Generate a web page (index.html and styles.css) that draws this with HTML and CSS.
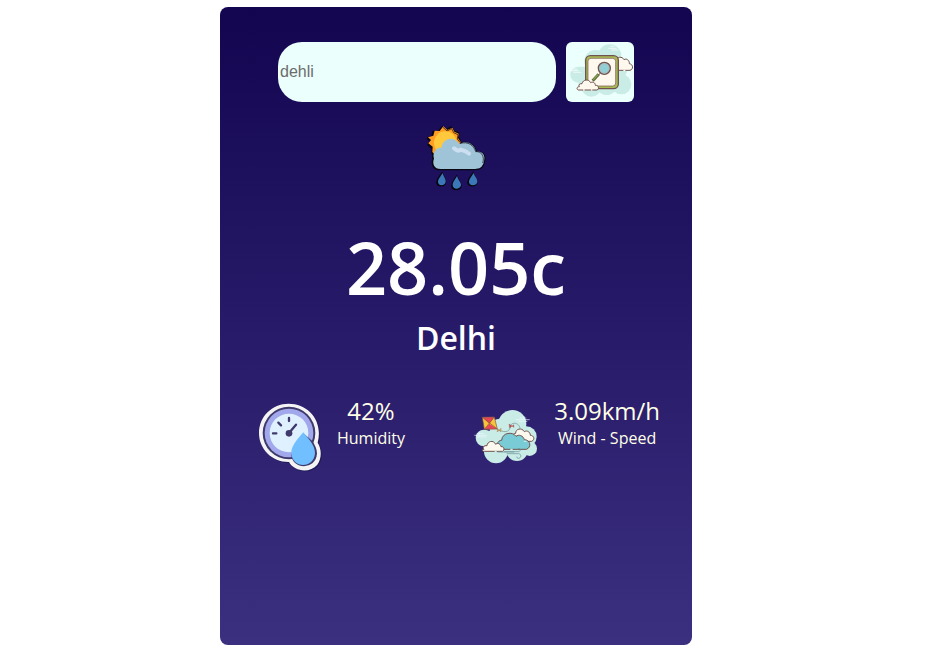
FILE: index.html
```html
<!DOCTYPE html>
<html lang="en">
<head>
<meta charset="utf-8">
<meta name="viewport" content="width=device-width, initial-scale=1">
<title>Weather</title>
<link rel="stylesheet" href="styles.css">
</head>
<body>
<main class="card">
  <form class="search">
    <input class="search-input" type="text" placeholder="dehli" aria-label="City name">
    <button class="search-button" type="button" aria-label="Search">
      <svg viewBox="18 18 204 180" aria-hidden="true">
        <g fill="#c9ece6">
          <circle cx="149" cy="60" r="35"/>
          <circle cx="107" cy="76" r="34"/>
          <circle cx="55" cy="116" r="24"/>
          <circle cx="94" cy="152" r="30"/>
          <circle cx="140" cy="145" r="32"/>
          <circle cx="184" cy="145" r="30"/>
          <circle cx="165" cy="100" r="36"/>
          <path d="M60 92h90v60H55Z"/>
        </g>
        <path stroke="#fff" stroke-width="2" d="M145 37h24M151 31h12M154 42h22M30 104h26M38 99h14M40 109h24"/>
        <path fill="#fff8ee" stroke="#70524e" stroke-width="3" d="M168 103h42c11-3 10-18-2-20c1-10-9-17-16-12c-5-11-22-9-25 3Z"/>
        <rect x="77" y="59" width="98" height="99" rx="14" fill="#a9ba55" stroke="#70524e" stroke-width="4"/>
        <rect x="84" y="67" width="83" height="83" rx="9" fill="#fff8ee" stroke="#70524e" stroke-width="2"/>
        <path stroke="#70524e" stroke-width="3" d="m122 110-6 7"/>
        <path stroke="#596d3e" stroke-width="9" d="m116 115-18 19"/>
        <path stroke="#91a551" stroke-width="4" d="m114 116-14 15"/>
        <circle cx="133" cy="97" r="18" fill="#91cfd7" stroke="#70524e" stroke-width="4"/>
        <circle cx="133" cy="97" r="14" stroke="#b9afa7" stroke-width="2"/>
        <path fill="#fff8ee" stroke="#70524e" stroke-width="3" d="M55 162h56c8-3 5-15-5-14c0-8-8-12-14-8c-6-12-23-10-26 3c-8-1-11 5-8 9c-8 0-9 8-3 10Z"/>
        <path stroke="#fff8ee" stroke-width="4" d="M69 162h5M93 162h4M190 103h6"/>
      </svg>
    </button>
  </form>

  <section class="weather">
    <svg class="weather-icon" viewBox="33 27 180 198" role="img" aria-label="Sun, clouds and rain">
      <g fill="#070611" stroke="#070611" stroke-width="6" stroke-linejoin="round">
        <path d="m38 67 14-6 3-14 15 1 11-14 12 9 15-9 8 12 14 5-1 13 6 12-22 42H62l-10-6 1-15-13-10 8-10Z"/>
        <path d="M75 160C55 160 50 143 55 130C51 110 64 97 78 99L134 85C150 75 178 82 183 109C206 106 211 122 207 136C203 156 195 160 180 160Z"/>
      </g>
      <path fill="#ff9e22" d="m39 64 16-5 4-15 15 1 11-14 12 11 15-7 6 12 13 6-2 13 8 12-22 40H62l-10-10 1-16-13-10 8-10Z"/>
      <path stroke="#070611" stroke-width="2" d="m84 34 12 11 14-7 6 12 13 6-2 13 8 10"/>
      <circle cx="91" cy="80" r="34" fill="#ffc93b"/>
      <path fill="#a0c4d7" d="M77 159C57 159 51 142 57 128C51 108 66 93 80 95C80 73 108 57 128 77Q132 81 134 84C150 72 178 81 183 107C206 104 211 121 207 136C203 155 193 159 180 159Z"/>
      <path stroke="#070611" stroke-width="2" d="M136 82c23-6 40 5 46 25c20-2 27 18 21 34"/>
      <path stroke="#cbdff0" stroke-width="12" stroke-linecap="round" d="M117 97q12 11 20 4q16 3 25 12"/>
      <g fill="#070611" stroke="#070611" stroke-width="5">
        <path d="M81 172C72 185 66 189 66 199C66 212 88 213 91 200C93 191 86 185 81 172Z"/>
        <path d="M125 181C117 194 111 199 111 210C111 224 135 223 137 210C138 200 130 195 125 181Z"/>
        <path d="M174 172C165 185 159 189 159 199C159 213 183 212 185 199C186 190 179 185 174 172Z"/>
      </g>
      <path fill="#3c78b8" d="M83 171C75 184 69 189 69 198C70 211 89 211 92 198C93 188 86 184 83 171ZM126 180C119 193 113 198 113 208C114 222 135 221 138 208C139 199 130 194 126 180ZM176 171C168 184 162 189 162 198C163 211 184 211 187 198C188 188 180 184 176 171Z"/>
    </svg>
    <h1 class="temperature">28.05c</h1>
    <h2 class="city">Delhi</h2>
  </section>

  <section class="details">
    <div class="detail">
      <svg class="humidity-icon" viewBox="24 21 192 207" aria-hidden="true">
        <path fill="#17143f" opacity=".55" transform="translate(3 3)" d="M116 23C66 23 27 62 27 111C27 160 67 199 117 198C134 228 180 232 202 206C215 190 216 159 203 140C220 75 176 23 116 23Z"/>
        <path fill="#f4f4f5" d="M116 23C66 23 27 62 27 111C27 160 67 199 117 198C134 228 180 232 202 206C215 190 216 159 203 140C220 75 176 23 116 23Z"/>
        <circle cx="117" cy="111" r="79" fill="#3f3a6b"/>
        <circle cx="117" cy="111" r="73" fill="#a1a8eb"/>
        <circle cx="117" cy="111" r="58" fill="#dff0ff"/>
        <path fill="#3f3a6b" d="M124 176C126 222 199 223 201 172C201 158 194 145 186 134L160 112Z"/>
        <path fill="#72bfff" d="M160 109C138 134 124 151 124 171C126 219 193 218 195 171C195 151 180 133 160 109Z"/>
        <path stroke="#3f3a6b" stroke-width="7" stroke-linecap="round" d="M117 66v9M85 80l8 8M69 112h10M117 111l21-25"/>
        <circle cx="117" cy="112" r="10" fill="#3f3a6b"/>
      </svg>
      <div class="detail-text">
        <p class="value">42%</p>
        <p class="label">Humidity</p>
      </div>
    </div>
    <div class="detail">
      <svg class="wind-icon" viewBox="18 24 198 171" aria-hidden="true">
        <g fill="#c9ece6">
          <circle cx="136" cy="72" r="42"/>
          <circle cx="98" cy="86" r="30"/>
          <circle cx="51" cy="114" r="25"/>
          <circle cx="87" cy="154" r="36"/>
          <circle cx="150" cy="150" r="33"/>
          <circle cx="188" cy="146" r="22"/>
          <circle cx="178" cy="110" r="31"/>
          <path d="M58 92h110v65H60Z"/>
        </g>
        <path stroke="#edf8ff" stroke-width="2" d="M146 59h42M158 54h20M171 48v12M154 64h27M22 106h38M29 101h22M37 97v14M29 111h29"/>
        <path fill="#f8c437" d="m46 52 36-1 9 36-39 1Z"/>
        <path fill="#e84555" d="m46 52 36-1-15 20ZM91 87l-39 1 15-17Z"/>
        <path stroke="#805348" stroke-width="2" d="m46 52 36-1 9 36-39 1ZM46 52l45 35M82 51 52 88"/>
        <path stroke="#758d8f" stroke-width="2" d="M91 88c31 16 39 1 39-10c5-15 28-8 29 7"/>
        <path fill="#efb544" stroke="#805348" d="m91 87 10 8 1-10-11 11Z"/>
        <path fill="#c74b59" stroke="#805348" d="m126 72 15 10-1-8-12 10Z"/>
        <path fill="#fff8ee" stroke="#70524e" stroke-width="3" d="M147 124h47c11-5 7-18-4-18c0-10-10-16-18-11c-8-14-27-8-26 5c-13 1-14 18 1 24Z"/>
        <path fill="#79cbd5" stroke="#70524e" stroke-width="3" d="M94 148h84c17-6 12-29-6-29c-3-12-17-17-25-10c-9-15-42-12-43 12c-12-1-20 19-10 27Z"/>
        <path fill="#fff8ee" stroke="#70524e" stroke-width="3" d="M52 154h55c7-4 4-16-5-14c-2-10-12-12-16-7c-7-15-25-9-26 4c-11-2-14 8-9 11c-7 1-6 7 1 6Z"/>
        <path stroke="#c9ece6" stroke-width="4" d="M83 154h6M130 148h7M171 124h7"/>
        <path stroke="#658d8f" stroke-width="2" d="M111 155h43c8 0 7-11 0-10M91 156h51M119 161h36c9 1 8 13 0 14q-5 1-6-5"/>
      </svg>
      <div class="detail-text">
        <p class="value">3.09km/h</p>
        <p class="label">Wind - Speed</p>
      </div>
    </div>
  </section>
</main>
</body>
</html>
```

FILE: styles.css
```css
* {
  box-sizing: border-box;
}

body {
  margin: 0;
  padding: 7px 37px 0 0;
  font-family: "Segoe UI", "Open Sans", "Noto Sans", sans-serif;
}

.card {
  width: 100%;
  max-width: 472px;
  min-height: calc(100vh - 7px);
  margin: 0 auto;
  padding: 35px 32px;
  border-radius: 8px;
  background: linear-gradient(#130550, #3b2f80);
  color: #fff;
  text-align: center;
}

.search {
  display: flex;
  justify-content: center;
  gap: 10px;
  margin: 0 26px;
}

.search-input {
  flex: 1;
  min-width: 0;
  height: 60px;
  padding: 0 2px;
  border: 0;
  border-radius: 24px;
  background: #ebfffc;
  font: 16px "Liberation Sans", Arial, sans-serif;
}

.search-input::placeholder {
  color: #6c6c6c;
}

.search-button {
  flex: none;
  width: 68px;
  height: 60px;
  padding: 0;
  border: 0;
  border-radius: 6px;
  background: #ebfffc;
  overflow: hidden;
}

svg {
  display: block;
  fill: none;
}

.weather-icon {
  width: 60px;
  margin: 23px auto 0;
}

.temperature {
  margin: 28px 0 0;
  font-size: 72px;
  line-height: 96px;
  font-weight: 600;
}

.city {
  margin: 0;
  font-size: 32px;
  line-height: 46px;
  font-weight: 600;
}

.details {
  display: flex;
  justify-content: space-between;
  margin-top: 35px;
  padding-left: 6px;
  color: #ffffe6;
}

.detail {
  display: flex;
  align-items: flex-start;
  gap: 15px;
}

.humidity-icon {
  width: 64px;
  margin-top: 7px;
}

.wind-icon {
  width: 66px;
  margin-top: 12px;
}

.value,
.label {
  margin: 0;
}

.value {
  font-size: 24px;
  line-height: 30px;
}

.label {
  font-size: 16px;
  line-height: 24px;
}
```
